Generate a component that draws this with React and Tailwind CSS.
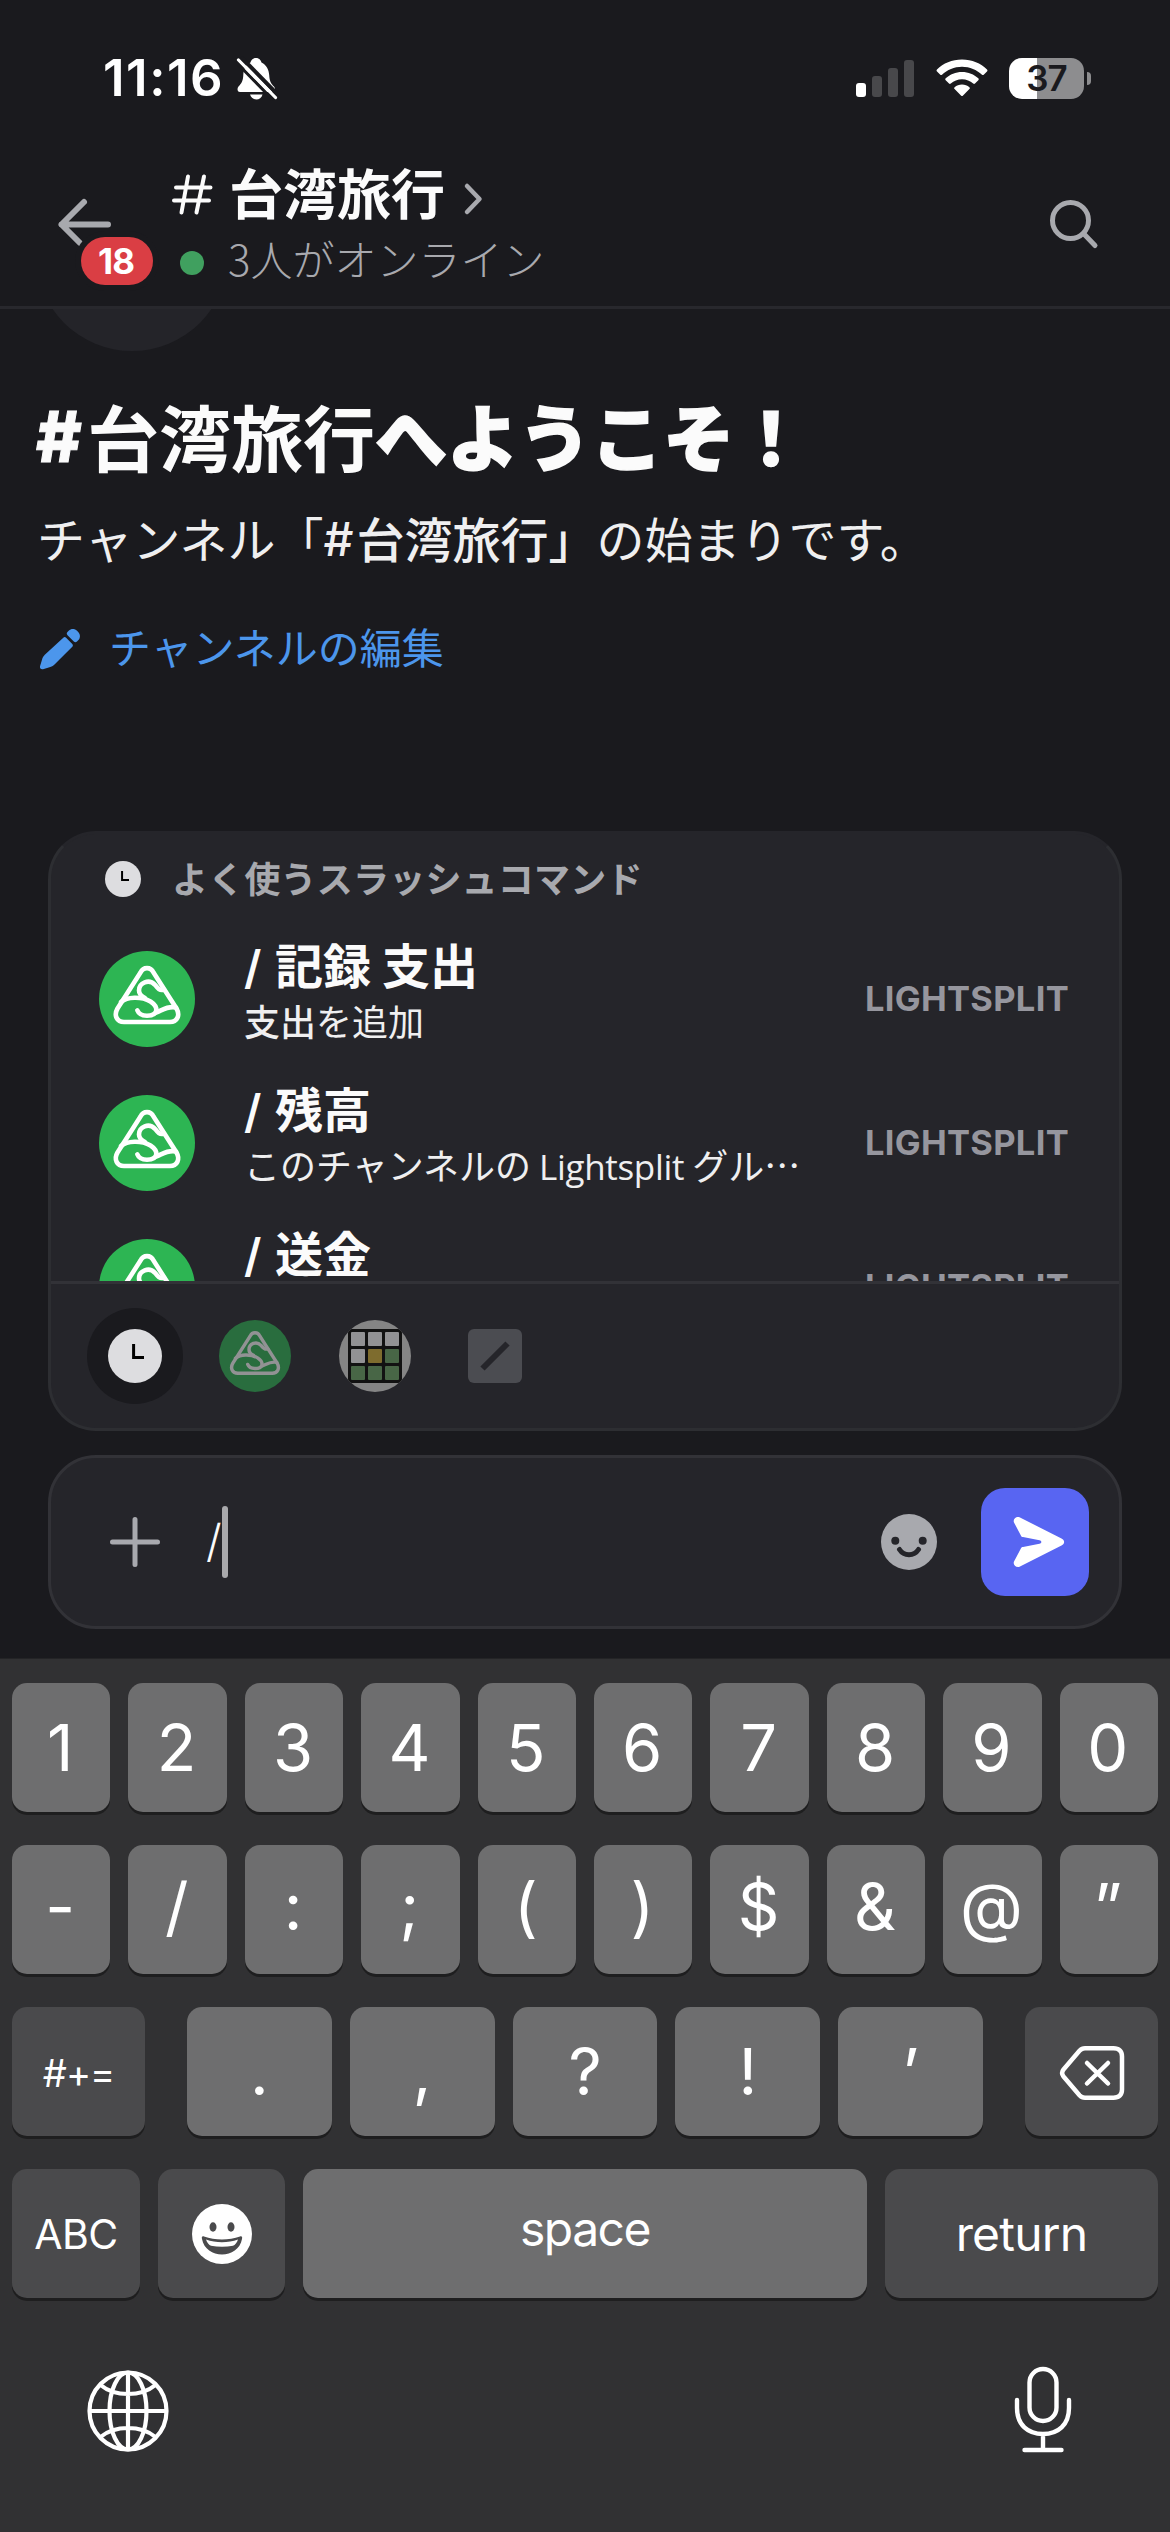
const JP = "font-['Noto_Sans_CJK_JP','Noto_Sans',sans-serif]";

function BellOff() {
  return (
    <svg className="h-[45px] w-[42px]" viewBox="0 0 42 45" fill="none">
      <path
        d="M20 2c-3.500 0-5 2.500-5.500 4.500C9 9 7.500 14 7.300 19c-.2 6-2 8.500-4.800 11.500C1 32 1 36 4 36h32c3.500 0 3.500-4 2-5.500-3-3-4.500-5.500-4.800-11.500-.3-5-2.700-10-7.700-12.500C25 4.500 23.500 2 20 2Z"
        fill="#fff"
      />
      <path d="M14 38.500h12.500c-1 3.200-3.300 5-6.200 5s-5.400-1.800-6.300-5Z" fill="#fff" />
      <path d="M5 1 43 40" stroke="#1a1a1e" strokeWidth="4" />
      <path d="M-1 5 37 44" stroke="#1a1a1e" strokeWidth="3" />
      <path d="M2.500 4 39.500 41.500" stroke="#fff" strokeWidth="3.200" strokeLinecap="round" />
    </svg>
  );
}

function Wifi() {
  return (
    <svg className="h-[38px] w-[52px]" viewBox="0 0 52 38" fill="#fff">
      <path d="M26 0.500C36 0.500 44.800 4.300 51 10.500c.6.600.6 1.300 0 1.900l-3.300 3.300c-.5.500-1.200.5-1.700 0C40.800 10.700 33.800 7.700 26 7.700S11.200 10.700 6 15.700c-.5.500-1.200.5-1.700 0L1 12.400c-.6-.6-.6-1.300 0-1.900C7.200 4.300 16 .5 26 .5Z" />
      <path d="M26 13c6.300 0 12 2.400 16.300 6.300.6.600.6 1.300 0 1.900L39 24.500c-.6.500-1.200.5-1.800 0-3-2.700-6.900-4.300-11.200-4.300s-8.200 1.600-11.200 4.300c-.6.500-1.200.5-1.800 0l-3.300-3.300c-.6-.6-.6-1.300 0-1.900C14 15.400 19.700 13 26 13Z" />
      <path d="M26 25.600c2.800 0 5.400 1 7.400 2.600.6.600.6 1.300 0 1.900l-6.600 6.600c-.5.500-1.100.5-1.600 0l-6.600-6.600c-.6-.6-.6-1.300 0-1.900 2-1.600 4.600-2.600 7.400-2.600Z" />
    </svg>
  );
}

function StatusBar() {
  return (
    <div className="flex h-[156px] items-center pl-[103px] pr-[79px] font-['Inter',sans-serif]">
      <div className="w-[133px] whitespace-nowrap text-[51px] font-semibold leading-[60px] tracking-[1.500px] text-white">11:16</div>
      <BellOff />
      <div className="ml-auto flex items-center">
        <div className="flex h-[37px] items-end gap-[6px]">
          <div className="h-[14px] w-[10px] rounded-[3px] bg-white" />
          <div className="h-[21px] w-[10px] rounded-[3px] bg-[#48484b]" />
          <div className="h-[29px] w-[10px] rounded-[3px] bg-[#48484b]" />
          <div className="h-[37px] w-[10px] rounded-[3px] bg-[#48484b]" />
        </div>
        <div className="ml-[22px]">
          <Wifi />
        </div>
        <div className="ml-[21px] flex h-[41px] w-[75px] items-center justify-center rounded-[13px] bg-[linear-gradient(90deg,#fff_28px,#8d8d8f_28px)] text-[35px] font-semibold leading-[41px] tracking-[-1px] text-[#1a1a1e]">
          37
        </div>
        <div className="ml-[3px] h-[13px] w-[4px] rounded-r-[4px] bg-[#8d8d8f]" />
      </div>
    </div>
  );
}

function Header() {
  return (
    <div className="flex h-[153px] items-start border-b-[3px] border-[#28282d] pl-[54px] pr-[68px]">
      <div className="relative mt-[39px] h-[60px] w-[114px]">
        <svg className="h-[60px] w-[60px]" viewBox="0 0 60 60" fill="none" stroke="#a8a9ae" strokeWidth="6" strokeLinecap="round" strokeLinejoin="round">
          <path d="M54 29.500H7.500M30 7 7.500 29.500 26 48" />
        </svg>
        <div className="absolute left-[21px] top-[36px] flex h-[60px] w-[84px] items-center justify-center rounded-full bg-[#1a1a1e]">
          <div className="flex h-[48px] w-[72px] items-center justify-center rounded-full bg-[#da3e44] pr-[2px] font-['Inter',sans-serif] text-[35px] font-bold leading-[48px] tracking-[-1px] text-white">
            18
          </div>
        </div>
      </div>
      <div className="flex flex-col">
        <div className="mt-[5px] flex h-[66px] items-center">
          <svg className="ml-[3px] h-[42px] w-[44px]" viewBox="0 0 44 42" fill="none" stroke="#fbfbfb" strokeWidth="4" strokeLinecap="round">
            <path d="M17 3.500 10.500 39.500M33 3.500 25.500 39.500M5 14.500H39.500M3 27.500H38" />
          </svg>
          <span className={`${JP} -mt-[4px] ml-[14px] text-[54px] font-bold leading-[66px] text-[#fbfbfb]`}>台湾旅行</span>
          <svg className="ml-[18px] mt-[9px] h-[34px] w-[22px]" viewBox="0 0 22 34" fill="none" stroke="#a8a9ae" strokeWidth="4.500" strokeLinecap="round" strokeLinejoin="round">
            <path d="M4 4 16.500 17 4 30" />
          </svg>
        </div>
        <div className="flex h-[60px] items-center">
          <div className="ml-[12px] mt-[11px] h-[24px] w-[24px] rounded-full bg-[#40a05f]" />
          <span className={`${JP} ml-[24px] mt-[2px] text-[42px] font-light leading-[60px] text-[#a8a9ae]`}>3人がオンライン</span>
        </div>
      </div>
      <svg className="ml-auto mt-[40px] h-[56px] w-[56px]" viewBox="0 0 56 56" fill="none" stroke="#a8a9ae" strokeWidth="5" strokeLinecap="round">
        <circle cx="24.500" cy="24.500" r="18" />
        <path d="M37.500 37.500 49 49.500" />
      </svg>
    </div>
  );
}

function Welcome() {
  return (
    <div className="h-[522px] overflow-hidden pl-[36px]">
      <div className="h-[42px] overflow-hidden">
        <div className="-mt-[150px] h-[192px] w-[192px] rounded-full bg-[#242429]" />
      </div>
      <h1 className={`${JP} mt-[39px] flex h-[90px] items-center whitespace-nowrap text-[72px] font-bold leading-[90px] text-[#fbfbfb]`}>
        <span className="mt-[3px] w-[51px] font-['Inter',sans-serif] text-[70px] font-extrabold [-webkit-text-stroke:1px_#fbfbfb]">#</span>
        <span>台湾旅行</span>
        <span className="-mt-[2px] font-black [-webkit-text-stroke:1.500px_#fbfbfb]">へようこそ！</span>
      </h1>
      <p className={`${JP} ml-[1px] mt-[24px] flex h-[66px] items-center whitespace-nowrap text-[48px] leading-[66px] text-[#efeff0]`}>
        <span>チャンネル「</span>
        <span className="mt-[3px] w-[33px] font-['Inter',sans-serif] text-[47px] font-medium">#</span>
        <span className="font-medium">台湾旅行」</span>
        <span>の始まりです。</span>
      </p>
      <div className="mt-[46px] flex h-[60px] items-center">
        <svg className="ml-[3px] mt-[8px] h-[42px] w-[42px]" viewBox="0 0 42 42" fill="#4c96ec">
          <path d="m28.500 3 1.200-1.200c2.300-2.300 6-2.300 8.300 0l1.200 1.200c2.300 2.300 2.300 6 0 8.300L38 12.500c-1 1-2.200 1-3.200 0L28.500 6.200c-1-1-1-2.200 0-3.200Z" />
          <path d="M24.300 8.700c.8-.8 2-.8 2.800 0l6.200 6.200c.8.800.8 2 0 2.800L15.500 35.500c-1.500 1.500-3 2.300-5 2.800l-6.500 2c-2 .4-3.400-1-3-3l2-6.500c.5-2 1.300-3.500 2.800-5Z" />
        </svg>
        <span className={`${JP} ml-[28px] text-[42px] leading-[60px] text-[#4c96ec]`}>チャンネルの編集</span>
      </div>
    </div>
  );
}

function SplitLogo({ className, disc, line }) {
  return (
    <svg className={className} viewBox="0 0 96 96" fill="none">
      <circle cx="48" cy="48" r="48" fill={disc} />
      <g stroke={line} strokeWidth="4.600" strokeLinecap="round" strokeLinejoin="round">
        <path d="M41.500 21.500C44.300 15.600 51.700 15.600 54.500 21.500L77.500 57.500C81.500 64.500 78 71 71 71H25C18 71 14.500 64.500 18.500 57.500Z" />
        <path d="M22 51C28 45.800 42 45 51.500 50.500C60 56 59.500 64.700 48 64.700C43 64.700 39.500 62.500 38.300 59.300" />
        <path d="M65 38.500C60.500 40 58.300 36.800 56 33.800C50 27.500 40 31.500 40 39.500C40 43.500 43 45.500 46 47" />
        <path d="M57 61.500C63 59.500 68.500 54.500 77 56.500" />
      </g>
    </svg>
  );
}

function Clock({ className }) {
  return (
    <svg className={className} viewBox="0 0 54 54" fill="none">
      <circle cx="27" cy="27" r="27" fill="#dddde0" />
      <path d="M25.600 15V28.500H36" stroke="#000" strokeWidth="3" />
    </svg>
  );
}

function Command({ name, children }) {
  return (
    <div className="flex h-[144px] shrink-0 items-center pl-[48px] pr-[50px]">
      <SplitLogo className="h-[96px] w-[96px] shrink-0" disc="#2db553" line="#fff" />
      <div className={`${JP} -mt-[18px] ml-[49px] flex flex-col whitespace-nowrap`}>
        <div className="flex h-[60px] items-baseline text-[48px] font-bold leading-[60px] text-[#fbfbfb]">
          <span className="w-[31px] font-['Inter',sans-serif] text-[46px] font-semibold">/</span>
          <span>{name}</span>
        </div>
        <div className="h-[54px] text-[36px] leading-[54px] text-[#efeff0]">{children}</div>
      </div>
      <div className="ml-auto font-['Inter',sans-serif] text-[34.500px] font-bold leading-[48px] tracking-[0.3px] text-[#96969e]">LIGHTSPLIT</div>
    </div>
  );
}

function GridIcon() {
  const cells = ["#929294", "#929294", "#929294", "#929294", "#7e6c2e", "#486646", "#486646", "#486646", "#486646"];
  return (
    <div className="flex h-[72px] w-[72px] items-center justify-center overflow-hidden rounded-full bg-[#858585]">
      <div className="grid h-[54px] w-[54px] grid-cols-3 gap-[3px] rounded-[4px] bg-[#121212] p-[3px]">
        {cells.map((c, i) => (
          <div key={i} className="rounded-[1px]" style={{ backgroundColor: c }} />
        ))}
      </div>
    </div>
  );
}

function CommandPanel() {
  return (
    <div className="mx-[48px] h-[600px] overflow-hidden rounded-[48px] border-[3px] border-[#2d2e32] border-t-[#25252a] bg-[#25252a]">
      <div className="flex h-[447px] flex-col overflow-hidden">
        <div className="flex h-[93px] shrink-0 items-center pl-[54px]">
          <Clock className="-mt-[3px] h-[36px] w-[36px]" />
          <span className={`${JP} -mt-[7px] ml-[31px] text-[36px] font-bold leading-[54px] tracking-[0.2px] text-[#a8a9ae]`}>よく使うスラッシュコマンド</span>
        </div>
        <Command name="記録 支出">
          <span className="font-medium">支出</span>を追加
        </Command>
        <Command name="残高">
          このチャンネルの<span className="ml-[8px] mr-[8px] font-['Open_Sans','Noto_Sans',sans-serif] text-[35px] tracking-[-0.300px]">Lightsplit</span>グル
          <span className="tracking-[-1px]">…</span>
        </Command>
        <Command name="送金" />
      </div>
      <div className="flex h-[147px] items-start border-t-[3px] border-[#323237] pl-[36px] pt-[24px]">
        <div className="flex h-[96px] w-[96px] items-center justify-center rounded-full bg-[#1a1a1e]">
          <Clock className="h-[54px] w-[54px]" />
        </div>
        <div className="ml-[36px] flex h-[96px] items-center gap-[48px]">
          <SplitLogo className="h-[72px] w-[72px]" disc="#296d3e" line="#929294" />
          <GridIcon />
          <svg className="ml-[9px] h-[54px] w-[54px]" viewBox="0 0 54 54">
            <rect width="54" height="54" rx="6" fill="#4b4c51" />
            <path d="M14.500 39.500 39.500 14.500" stroke="#25252a" strokeWidth="6" />
          </svg>
        </div>
      </div>
    </div>
  );
}

function Composer() {
  return (
    <div className="mx-[48px] mt-[24px] flex h-[174px] items-center rounded-[48px] border-[3px] border-[#323237] bg-[#25252a] pl-[57px] pr-[30px]">
      <svg className="h-[54px] w-[54px]" viewBox="0 0 54 54" fill="none" stroke="#a8a9ae" strokeWidth="5" strokeLinecap="round">
        <path d="M27 4.500V49.500M4.500 27H49.500" />
      </svg>
      <div className="ml-[44px] flex items-center">
        <span className="-mt-[3px] w-[16px] font-['Inter',sans-serif] text-[45px] font-light leading-[72px] text-[#fbfbfb]">/</span>
        <div className="h-[72px] w-[6px] rounded-full bg-[#a9a9ac]" />
      </div>
      <svg className="ml-auto h-[56px] w-[56px]" viewBox="0 0 56 56" fill="none">
        <circle cx="28" cy="28" r="28" fill="#a8a9ae" />
        <circle cx="14.300" cy="26.700" r="4" fill="#25252a" />
        <circle cx="41.700" cy="26.700" r="4" fill="#25252a" />
        <path d="M18.500 35.500C23 42.500 33 42.500 37.500 35.500" stroke="#25252a" strokeWidth="5" strokeLinecap="round" />
      </svg>
      <div className="ml-[44px] flex h-[108px] w-[108px] items-center justify-center rounded-[24px] bg-[#5865f2]">
        <svg className="h-[108px] w-[108px]" viewBox="0 0 108 108" fill="#fff">
          <path d="M39 29.500 80.500 50.500C84 52.200 84 55.800 80.500 57.500L39 78.500C35.500 80.300 31.500 77 33 73.500L40 60.300C40.500 59.300 41 59 42 58.900L58.500 55.700C61 55.200 61 52.800 58.500 52.300L42 49.100C41 49 40.500 48.700 40 47.700L33 34.500C31.500 31 35.500 27.700 39 29.500Z" />
        </svg>
      </div>
    </div>
  );
}

function Key({ dark, className = "flex-1", children }) {
  return (
    <div
      className={`flex h-[129px] items-center justify-center rounded-[15px] shadow-[0_3px_0_#1e1e1f] ${dark ? "bg-[#4a4a4c]" : "bg-[#6e6e6f]"} ${className}`}
    >
      {children}
    </div>
  );
}

function CharRow({ chars, glyph }) {
  return (
    <div className="flex gap-[18px]">
      {chars.map((c) => (
        <Key key={c}>
          <span className={`text-[65px] leading-[80px] ${glyph}`}>{c}</span>
        </Key>
      ))}
    </div>
  );
}

function Keyboard() {
  return (
    <div className="mt-[29px] flex h-[874px] flex-col gap-[33px] border-t border-[#242426] bg-[#313133] px-[12px] pt-[24px] font-['Inter',sans-serif] text-white">
      <CharRow chars={["1", "2", "3", "4", "5", "6", "7", "8", "9", "0"]} glyph="mr-[2px]" />
      <CharRow chars={["-", "/", ":", ";", "(", ")", "$", "&", "@", "”"]} glyph="-mt-[5px] mr-[2px]" />
      <div className="flex">
        <Key dark className="w-[133px]">
          <span className="mt-[4px] text-[38px] tracking-[-1px]">#+=</span>
        </Key>
        <div className="mx-[42px] flex flex-1 gap-[18px]">
          {[".", ",", "?", "!", "’"].map((c) => (
            <Key key={c}>
              <span className="text-[65px] leading-[80px]">{c}</span>
            </Key>
          ))}
        </div>
        <Key dark className="w-[133px]">
          <svg className="ml-[1px] mt-[3px] h-[56px] w-[68px]" viewBox="0 0 68 56" fill="none" stroke="#fff" strokeWidth="4.500" strokeLinecap="round" strokeLinejoin="round">
            <path d="M27 3.300H55.500C61 3.300 64 6.300 64 11.500V44.500C64 49.700 61 52.700 55.500 52.700H27C24.500 52.700 23 51.800 21.500 50.200L5.500 31.500C3.500 29 3.500 27 5.500 24.500L21.500 5.800C23 4.200 24.500 3.300 27 3.300Z" />
            <path d="M29 18 50 38.500M50 18 29 38.500" />
          </svg>
        </Key>
      </div>
      <div className="flex gap-[18px]">
        <Key dark className="w-[128px]">
          <span className="mt-[2px] text-[41px] tracking-[-0.5px]">ABC</span>
        </Key>
        <Key dark className="w-[127px]">
          <svg className="h-[60px] w-[60px]" viewBox="0 0 60 60" fill="none">
            <circle cx="30" cy="30" r="30" fill="#fff" />
            <ellipse cx="21" cy="23" rx="3.500" ry="4.700" fill="#4a4a4c" />
            <ellipse cx="39" cy="23" rx="3.500" ry="4.700" fill="#4a4a4c" />
            <path d="M12 32.500C23 36.500 37 36.500 48 32.500C50 32 50.500 33 50 35C46.500 55.500 13.500 55.500 10 35C9.500 33 10 32 12 32.500Z" fill="#4a4a4c" />
            <path d="M14 35.500C24 39 36 39 46 35.500C45 38.500 43 41 41 41.800C34 43.200 26 43.200 19 41.800C17 41 15 38.500 14 35.500Z" fill="#fff" />
          </svg>
        </Key>
        <Key className="w-[564px]">
          <span className="-mt-[9px] text-[48px] tracking-[-1.500px]">space</span>
        </Key>
        <Key dark>
          <span className="text-[48px] tracking-[-0.8px]">return</span>
        </Key>
      </div>
      <div className="mt-[32px] flex items-start justify-between pl-[74px] pr-[86px]">
        <svg className="mt-[6px] h-[84px] w-[84px]" viewBox="0 0 84 84" fill="none" stroke="#fff" strokeWidth="4.200">
          <circle cx="42" cy="42" r="38.500" />
          <ellipse cx="42" cy="42" rx="18.500" ry="38.500" />
          <path d="M42 3.500V80.500M3.500 42H80.500M14.500 16C29 28 55 28 69.500 16M14.500 68C29 56 55 56 69.500 68" />
        </svg>
        <svg className="mt-[3px] h-[88px] w-[58px]" viewBox="0 0 58 88" fill="none" stroke="#fff" strokeWidth="4.400" strokeLinecap="round">
          <rect x="15.500" y="3" width="27" height="52" rx="13.500" />
          <path d="M3 34V42C3 59 14 68 29 68S55 59 55 42V34M29 68V84M10.500 84H47.500" />
        </svg>
      </div>
    </div>
  );
}

export default function App() {
  return (
    <div className="h-[2532px] w-[1170px] overflow-hidden bg-[#1a1a1e]">
      <StatusBar />
      <Header />
      <Welcome />
      <CommandPanel />
      <Composer />
      <Keyboard />
    </div>
  );
}
